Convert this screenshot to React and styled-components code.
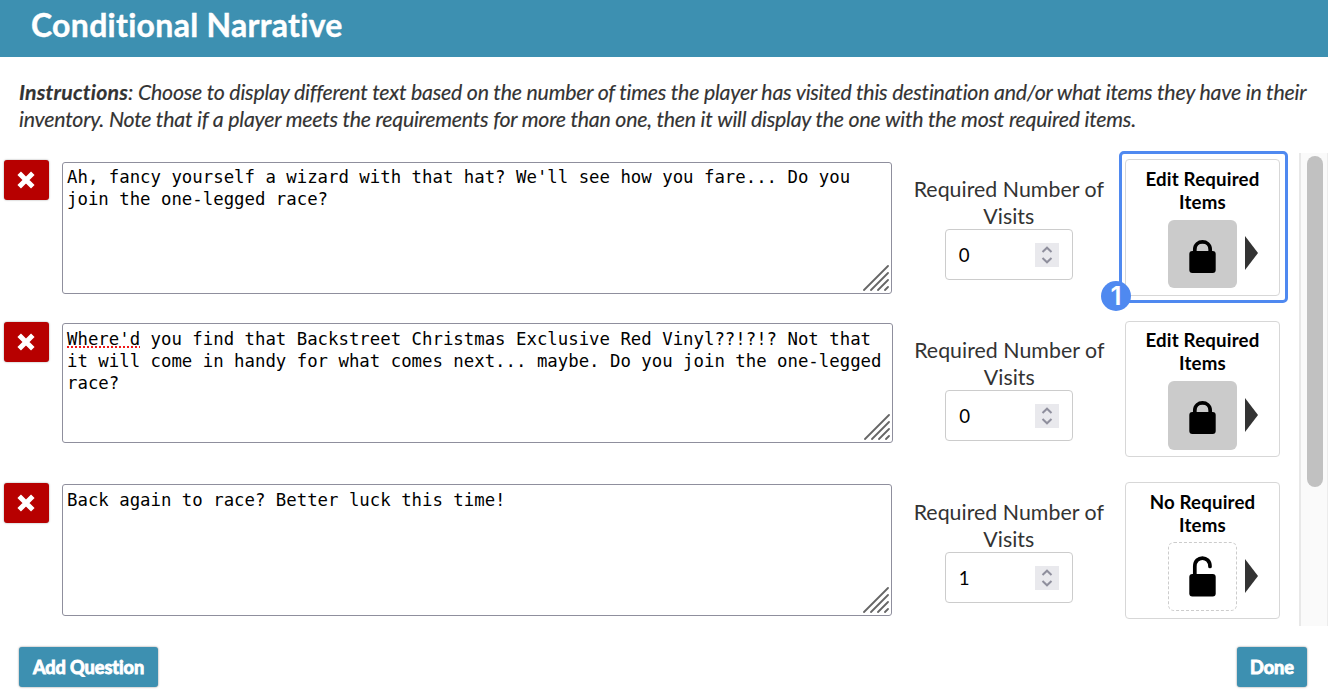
import React from "react";
import styled, { createGlobalStyle } from "styled-components";

const GlobalStyle = createGlobalStyle`
  *, *::before, *::after { box-sizing: border-box; }
  body { margin: 0; background: #fff; color: #333; font-family: Lato, sans-serif; font-variant-ligatures: none; }
`;

const Dialog = styled.div`
  width: 1328px;
  height: 700px;
  overflow: hidden;
  display: flex;
  flex-direction: column;
`;

const Header = styled.header`
  height: 57px;
  flex: none;
  padding: 5px 31px 0;
  background: #3d90b1;
`;

const Title = styled.h1`
  margin: 0;
  color: #fff;
  font-size: 32px;
  line-height: 40px;
  font-weight: 700;
  letter-spacing: 0.29px;
  -webkit-text-stroke: 0.4px #fff;
`;

const Instructions = styled.p`
  margin: 0;
  height: 96px;
  flex: none;
  padding: 22px 0 0 19px;
  font-size: 21.33px;
  line-height: 27px;
  font-style: italic;
  letter-spacing: -0.225px;
  -webkit-text-stroke: 0.15px #333;
  white-space: nowrap;

  strong {
    letter-spacing: 0.17px;
  }
`;

const ListArea = styled.div`
  height: 473px;
  flex: none;
  display: flex;
`;

const List = styled.div`
  flex: 1;
  min-width: 0;
  display: flex;
  flex-direction: column;
`;

const Row = styled.section`
  height: 161.33px;
  flex: none;
  display: flex;
  align-items: flex-start;
  padding: 6px 19px 0 4px;
`;

const DeleteButton = styled.button`
  width: 45px;
  height: 40px;
  flex: none;
  margin-top: 1.3px;
  padding: 0;
  border: 0;
  border-radius: 3px;
  background: #b70000;
  box-shadow: 0 0 2px rgba(0, 0, 0, 0.4);
  display: grid;
  place-items: center;
`;

const TextBox = styled.div`
  position: relative;
  flex: none;
  width: ${(p) => p.$width}px;
  height: ${(p) => p.$height}px;
  margin: 2.8px 0 0 13px;
  padding: 3.4px 4px;
  border: 1px solid #8f8f9d;
  border-radius: 3px;
  color: #000;
  font: 17.35px/22px "DejaVu Sans Mono", monospace;
  white-space: pre;
`;

const Misspelled = styled.span`
  text-decoration: underline dotted #f01818 2px;
  text-underline-offset: 2px;
  text-decoration-skip-ink: none;
`;

const Grip = styled.svg`
  position: absolute;
  right: 2px;
  bottom: 2px;
`;

const Visits = styled.div`
  flex: 1;
  padding: 17px 0 0 0.6px;
  display: flex;
  flex-direction: column;
  align-items: center;
`;

const VisitsLabel = styled.label`
  font-size: 21.33px;
  line-height: 27px;
  text-align: center;
  letter-spacing: 0.03px;
  white-space: pre;
`;

const NumberBox = styled.div`
  width: 128px;
  height: 51px;
  margin-top: -1.1px;
  padding: 1px 13px 0;
  border: 1px solid #ccc;
  border-radius: 4px;
  display: flex;
  align-items: center;
  justify-content: space-between;
  color: #000;
  font-size: 18.67px;
`;

const Spinner = styled.span`
  width: 24px;
  height: 24px;
  background: #e9e9ed;
  display: grid;
  place-items: center;
`;

const Card = styled.div`
  position: relative;
  flex: none;
  width: 155px;
  height: 136.7px;
  margin-top: 0.2px;
  padding-top: 7.8px;
  border: 1px solid #d7d7d7;
  border-radius: 4px;
`;

const CardTitle = styled.div`
  color: #000;
  font-size: 18.67px;
  line-height: 23px;
  font-weight: 700;
  letter-spacing: 0.18px;
  text-align: center;
  white-space: pre;
`;

const CardBody = styled.div`
  margin: 5.7px 0 0 42px;
  display: flex;
  align-items: center;
  gap: 8px;
`;

const LockTile = styled.div`
  width: 69px;
  height: 68.5px;
  border-radius: 6px;
  border: ${(p) => (p.$locked ? "0" : "1px dashed #ccc")};
  background: ${(p) => (p.$locked ? "#cbcbcb" : "#fff")};
  display: grid;
  place-items: center;
`;

const Highlight = styled.div`
  position: absolute;
  inset: -9px -9px -8px -7px;
  border: 3px solid #4f89f0;
  border-radius: 5px;
`;

const Badge = styled.div`
  position: absolute;
  left: -25px;
  bottom: -16px;
  width: 30px;
  height: 30px;
  border-radius: 50%;
  background: #4f89f0;
  color: #fff;
  font: 600 26px/30px Inter, sans-serif;
  text-align: center;
`;

const ScrollTrack = styled.div`
  flex: none;
  width: 29px;
  padding: 3px 0 0 6px;
  border-left: 2px solid #e8e8e8;
  border-right: 1px solid #ececec;
  background: #fafafa;
`;

const ScrollThumb = styled.div`
  width: 16px;
  height: 331px;
  border-radius: 8px;
  background: #c1c1c1;
`;

const Footer = styled.footer`
  flex: 1;
  padding: 21px 21px 0 19px;
  display: flex;
  align-items: flex-start;
  justify-content: space-between;
`;

const ActionButton = styled.button`
  width: ${(p) => p.$width}px;
  height: 40px;
  padding: 0;
  border: 0;
  border-radius: 3px;
  background: #3d90b1;
  box-shadow: 0 0 2px rgba(0, 0, 0, 0.5);
  color: #fff;
  font: 700 18.2px/40px Lato, sans-serif;
  letter-spacing: -0.08px;
  -webkit-text-stroke: 0.9px #fff;
  white-space: nowrap;
`;

const LockIcon = ({ locked }) => (
  <svg width="27" height="42" viewBox="0 0 27 42">
    <rect x="0.3" y="18" width="26.4" height={locked ? 22 : 22.5} rx="3" />
    <path
      d={locked ? "M5.8 20V16.5C5.8 6.3 21.2 6.3 21.2 16.5V20" : "M5.8 20V10.5C5.8 -0.8 21 -0.8 21 10.5"}
      fill="none"
      stroke="#000"
      strokeWidth="3.7"
      strokeLinecap="round"
    />
  </svg>
);

const Arrow = styled.svg`
  margin-top: -1px;
`;

const rows = [
  {
    text: "Ah, fancy yourself a wizard with that hat? We'll see how you fare... Do you\njoin the one-legged race?",
    width: 830, height: 132, visits: 0, locked: true, marked: true,
  },
  {
    flagged: "Where'd",
    text: " you find that Backstreet Christmas Exclusive Red Vinyl??!?!? Not that\nit will come in handy for what comes next... maybe. Do you join the one-legged\nrace?",
    width: 831, height: 120, visits: 0, locked: true,
  },
  { text: "Back again to race? Better luck this time!", width: 830, height: 132, visits: 1, locked: false },
];

function NarrativeRow({ row }) {
  return (
    <Row>
      <DeleteButton aria-label="Delete">
        <svg width="19" height="18" viewBox="0 0 19 18">
          <path d="M2.2 2.2L15.8 15.8M15.8 2.2L2.2 15.8" stroke="#fff" strokeWidth="5" />
        </svg>
      </DeleteButton>
      <TextBox $width={row.width} $height={row.height}>
        {row.flagged && <Misspelled>{row.flagged}</Misspelled>}
        {row.text}
        <Grip width="26" height="26" viewBox="0 0 26 26" stroke="#666" strokeWidth="1.8" strokeLinecap="round">
          <path d="M1 25L25 1M8 25L25 8M15 25L25 15M22 25L25 22" />
        </Grip>
      </TextBox>
      <Visits>
        <VisitsLabel>{"Required Number of\nVisits"}</VisitsLabel>
        <NumberBox>
          {row.visits}
          <Spinner>
            <svg width="12" height="18" viewBox="0 0 12 18" fill="none" stroke="#8f8f9d" strokeWidth="2">
              <path d="M1.5 6L6 1.7L10.5 6M1.5 12L6 16.3L10.5 12" />
            </svg>
          </Spinner>
        </NumberBox>
      </Visits>
      <Card>
        <CardTitle>{`${row.locked ? "Edit" : "No"} Required\nItems`}</CardTitle>
        <CardBody>
          <LockTile $locked={row.locked}>
            <LockIcon locked={row.locked} />
          </LockTile>
          <Arrow width="13" height="34" viewBox="0 0 13 34">
            <path d="M0 0L13 17L0 34Z" fill="#333" />
          </Arrow>
        </CardBody>
        {row.marked && <Highlight />}
        {row.marked && <Badge>1</Badge>}
      </Card>
    </Row>
  );
}

export default function App() {
  return (
    <Dialog>
      <GlobalStyle />
      <Header>
        <Title>Conditional Narrative</Title>
      </Header>
      <Instructions>
        <strong>Instructions</strong>: Choose to display different text based on the number of times the player has visited this destination and/or what items they have in their
        <br />
        inventory. Note that if a player meets the requirements for more than one, then it will display the one with the most required items.
      </Instructions>
      <ListArea>
        <List>
          {rows.map((row, i) => (
            <NarrativeRow key={i} row={row} />
          ))}
        </List>
        <ScrollTrack>
          <ScrollThumb />
        </ScrollTrack>
      </ListArea>
      <Footer>
        <ActionButton $width={139}>Add Question</ActionButton>
        <ActionButton $width={70}>Done</ActionButton>
      </Footer>
    </Dialog>
  );
}
